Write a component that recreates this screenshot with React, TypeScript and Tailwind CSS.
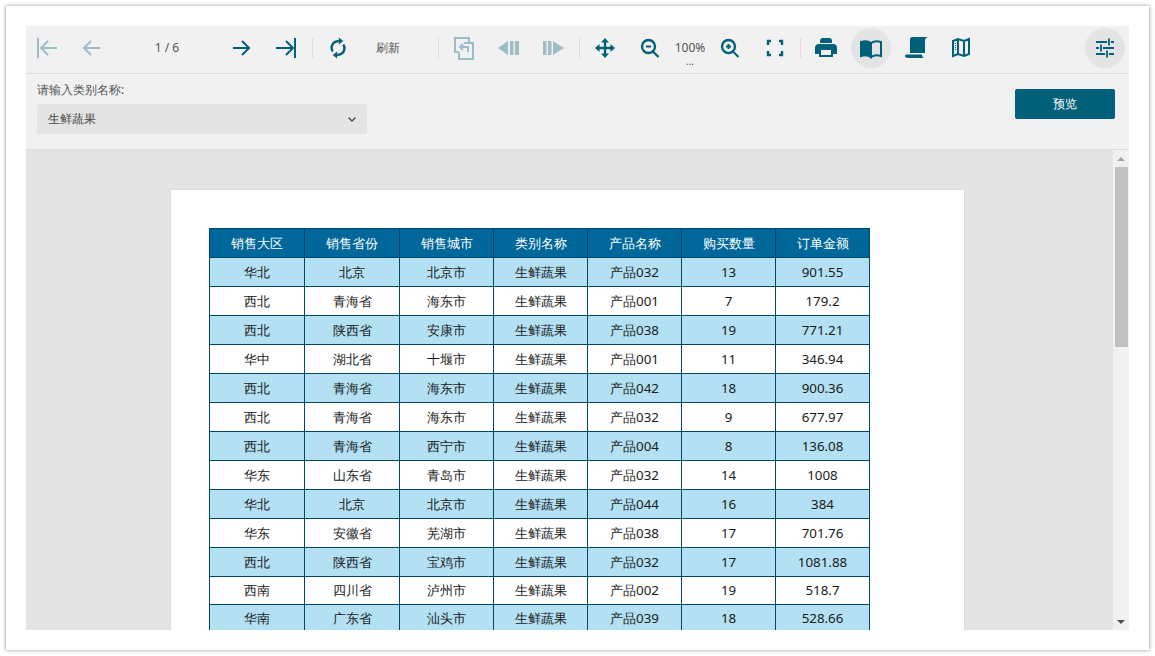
const rows = [
  ["华北", "北京", "北京市", "生鲜蔬果", "产品032", "13", "901.55"],
  ["西北", "青海省", "海东市", "生鲜蔬果", "产品001", "7", "179.2"],
  ["西北", "陕西省", "安康市", "生鲜蔬果", "产品038", "19", "771.21"],
  ["华中", "湖北省", "十堰市", "生鲜蔬果", "产品001", "11", "346.94"],
  ["西北", "青海省", "海东市", "生鲜蔬果", "产品042", "18", "900.36"],
  ["西北", "青海省", "海东市", "生鲜蔬果", "产品032", "9", "677.97"],
  ["西北", "青海省", "西宁市", "生鲜蔬果", "产品004", "8", "136.08"],
  ["华东", "山东省", "青岛市", "生鲜蔬果", "产品032", "14", "1008"],
  ["华北", "北京", "北京市", "生鲜蔬果", "产品044", "16", "384"],
  ["华东", "安徽省", "芜湖市", "生鲜蔬果", "产品038", "17", "701.76"],
  ["西北", "陕西省", "宝鸡市", "生鲜蔬果", "产品032", "17", "1081.88"],
  ["西南", "四川省", "泸州市", "生鲜蔬果", "产品002", "19", "518.7"],
  ["华南", "广东省", "汕头市", "生鲜蔬果", "产品039", "18", "528.66"],
];

const headers = ["销售大区", "销售省份", "销售城市", "类别名称", "产品名称", "购买数量", "订单金额"];

function Icon({ children, off, on }: { children: React.ReactNode; off?: boolean; on?: boolean }) {
  return (
    <button
      className={`flex h-10 w-10 shrink-0 items-center justify-center text-[#00607a] ${off ? "opacity-35" : ""} ${on ? "rounded-full bg-[#e4e4e4]" : ""}`}
    >
      <svg width="24" height="24" viewBox="0 0 24 24" fill="none" stroke="currentColor" strokeWidth="2">
        {children}
      </svg>
    </button>
  );
}

function Sep({ className = "" }: { className?: string }) {
  return <div className={`h-5 w-px shrink-0 bg-[#dcdcdc] ${className}`} />;
}

export default function App() {
  return (
    <div className="h-[656px] w-[1155px] overflow-hidden bg-white p-[6px] font-['Open_Sans','Noto_Sans_CJK_SC',sans-serif]">
      <div className="flex h-[644px] w-[1143px] flex-col bg-white p-5 shadow-[0_0_4px_rgba(0,0,0,0.45)]">
        <div className="flex h-full flex-col overflow-hidden bg-[#f1f1f1]">
          <div className="flex h-12 shrink-0 items-center gap-[5px] border-b border-[#dcdcdc] pb-[3px] pl-px pr-1">
            <Icon off>
              <path d="M3 2v20M6 12h16M13 5l-7 7 7 7" />
            </Icon>
            <Icon off>
              <path d="M20 12H4M11 5l-7 7 7 7" />
            </Icon>
            <div className="w-[99px] pl-px text-center text-xs text-[#555]">1 / 6</div>
            <Icon>
              <path d="M4 12h16M13 5l7 7-7 7" />
            </Icon>
            <Icon>
              <path d="M2 12h17M12 5l7 7-7 7M21 2v20" />
            </Icon>
            <Sep className="ml-px" />
            <Icon>
              <g transform="translate(12 12) scale(0.88) translate(-12 -12)">
                <path d="M6 16a7.5 7.5 0 0 1 2-10.500 7.500 7.500 0 0 1 5-1" strokeWidth="2.800" />
                <path d="M18 8a7.500 7.500 0 0 1-2 10.500 7.500 7.500 0 0 1-5 1" strokeWidth="2.800" />
                <path d="M13 0v8l5-4zM11 24v-8l-5 4z" fill="currentColor" stroke="none" />
              </g>
            </Icon>
            <div className="w-[50px] text-center text-xs text-[#555]">刷新</div>
            <div className="w-[15px]" />
            <Sep />
            <Icon off>
              <path d="M17 7V2H3v14h4M12 7h9v16H7v-7" />
              <path d="M8 11h8v5M11 8l-3 3 3 3" />
            </Icon>
            <Icon off>
              <path d="M1 12l10-7v14zM13 5h3.500v14H13zM18 5h4v14h-4z" fill="currentColor" stroke="none" />
            </Icon>
            <Icon off>
              <path d="M1 5h3.500v14H1zM6 5h3.500v14H6zM11 5l11 7-11 7z" fill="currentColor" stroke="none" />
            </Icon>
            <Sep />
            <Icon>
              <path d="M12 4v16M4 12h16" strokeWidth="2.400" />
              <path d="M12 2l4 4.500H8zM12 22l4-4.500H8zM2 12l4.500-4v8zM22 12l-4.500-4v8z" fill="currentColor" stroke="none" />
            </Icon>
            <Icon>
              <circle cx="10.500" cy="10.500" r="6.500" strokeWidth="2.400" />
              <path d="M15 15.500l5.500 5.500M8 10.500h5" strokeWidth="2.200" />
            </Icon>
            <div className="relative -mx-[5px] w-10 text-center text-xs text-[#555]">
              100%
              <div className="absolute left-0 right-0 top-4 text-center text-[10px] leading-[10px]">...</div>
            </div>
            <Icon>
              <circle cx="10.500" cy="10.500" r="6.500" strokeWidth="2.400" />
              <path d="M15 15.500l5.500 5.500M8 10.500h5M10.500 8v5" strokeWidth="2" />
            </Icon>
            <Icon>
              <path d="M5 9V5h3M16 5h3v4M19 15v4h-3M8 19H5v-4" strokeWidth="2.400" />
            </Icon>
            <Sep />
            <Icon>
              <path
                d="M6 5q0-3 3-3h6q3 0 3 3v2H6zM5 8h14q4 0 4 4v6h-4v3H5v-3H1v-6q0-4 4-4zM7 14v5h10v-5z"
                fill="currentColor"
                stroke="none"
                fillRule="evenodd"
              />
            </Icon>
            <Icon on>
              <path d="M12 7c-3-2-7-2-10-1v14c3-1 7-1 10 1z" fill="currentColor" />
              <path d="M12 7c3-2 7-2 10-1v14c-3-1-7-1-10 1z" />
            </Icon>
            <Icon>
              <path d="M8 1h16c-2 .5-3 2-3 4v12H6V3c0-1 1-2 2-2z" fill="currentColor" stroke="none" />
              <path d="M3 18.500h15v.500c0 1.500 1 2.500 2 3H5c-3 0-4-1-4-2 0-1 1-1.500 2-1.500z" fill="currentColor" stroke="none" />
            </Icon>
            <Icon>
              <path d="M4 5l5-2 6 2 5-2v15l-5 2-6-2-5 2zM9 3v15M15 5v15" />
              <path d="M6.500 7v8" strokeWidth="1" strokeDasharray="1 1" />
            </Icon>
            <div className="flex-1" />
            <button className="flex h-10 w-10 shrink-0 items-center justify-center rounded-full bg-[#e4e4e4] text-[#00607a]">
              <svg width="20" height="20" viewBox="0 0 20 20" fill="none" stroke="currentColor" strokeWidth="1.800">
                <path d="M1 4h11M16 4h3M14 0.500v7M1 10h3M8 10h11M6 6.500v7M1 16h9M14 16h5M12 12.500v7" />
              </svg>
            </button>
          </div>
          <div className="flex h-[76px] shrink-0 justify-between border-b border-[#dcdcdc] pl-[11px] pr-[14px] pt-[7px]">
            <div>
              <div className="text-xs leading-[18px] text-[#555]">请输入类别名称:</div>
              <div className="mt-[5px] flex h-[30px] w-[330px] items-center justify-between rounded-[2px] bg-[#e4e4e4] pl-[11px] pr-[11px] text-xs text-[#444]">
                生鲜蔬果
                <svg width="8" height="5" viewBox="0 0 8 5" fill="none" stroke="#444" strokeWidth="1.300">
                  <path d="M.5 .5l3.500 3.500 3.500-3.500" />
                </svg>
              </div>
            </div>
            <button className="mt-[8px] h-[30px] w-[100px] rounded-[2px] bg-[#00607a] text-xs text-white">预览</button>
          </div>
          <div className="flex min-h-0 flex-1">
            <div className="min-w-0 flex-1 overflow-hidden bg-[#e4e4e4] pl-[145px] pt-10">
              <div className="w-[793px] bg-white pb-10 pl-[38px] pt-[38px] shadow-[0_0_2px_rgba(0,0,0,0.1)]">
                <table className="w-[660px] table-fixed border-collapse text-center text-[13.33px] text-[#1a1a1a]">
                  <colgroup>
                    <col className="w-[95px]" />
                    <col className="w-[95px]" />
                    <col className="w-[94px]" />
                    <col className="w-[94px]" />
                    <col className="w-[94px]" />
                    <col className="w-[94px]" />
                    <col className="w-[94px]" />
                  </colgroup>
                  <thead>
                    <tr className="h-[29px] bg-[#00679a] text-white">
                      {headers.map((h) => (
                        <th key={h} className="border border-[#004766] p-0 pt-px font-normal">
                          {h}
                        </th>
                      ))}
                    </tr>
                  </thead>
                  <tbody>
                    {rows.map((r, i) => (
                      <tr
                        key={i}
                        className={`${i >= 11 ? "h-[28px]" : "h-[29px]"} ${i % 2 === 0 ? "bg-[#b3e0f2]" : "bg-white"}`}
                      >
                        {r.map((c, j) => (
                          <td key={j} className="border border-[#004766] p-0 pt-px">
                            {c}
                          </td>
                        ))}
                      </tr>
                    ))}
                  </tbody>
                </table>
              </div>
            </div>
            <div className="flex w-4 shrink-0 flex-col items-center bg-[#f1f1f1]">
              <div className="flex h-[17px] items-center">
                <div className="h-0 w-0 border-x-[4px] border-b-[4px] border-x-transparent border-b-[#a3a3a3]" />
              </div>
              <div className="h-[180px] w-[13px] bg-[#c1c1c1]" />
              <div className="flex-1" />
              <div className="flex h-[17px] items-center">
                <div className="h-0 w-0 border-x-[4px] border-t-[4px] border-x-transparent border-t-[#505050]" />
              </div>
            </div>
          </div>
        </div>
      </div>
    </div>
  );
}
